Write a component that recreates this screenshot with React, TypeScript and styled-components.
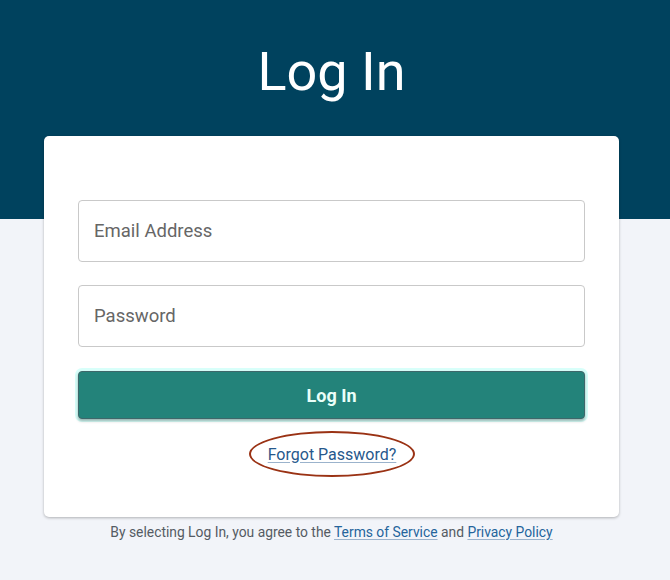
import React from "react";
import styled, { createGlobalStyle } from "styled-components";

const Global = createGlobalStyle`
  html, body { margin: 0; padding: 0; }
  body {
    font-family: Roboto, "Liberation Sans", Arial, sans-serif;
    background: #f2f4f9;
  }
  * { box-sizing: border-box; }
`;

const Page = styled.div`
  min-height: 580px;
  background: linear-gradient(#00425e 0, #00425e 219px, #f2f4f9 219px);
  display: flex;
  flex-direction: column;
  align-items: center;
  padding-right: 7px;
`;

const Title = styled.h1`
  margin: 0;
  height: 136px;
  padding-top: 36px;
  font-family: Roboto, "Liberation Sans", sans-serif;
  font-weight: 400;
  font-size: 54px;
  line-height: 72px;
  color: #ffffff;
  text-align: center;
`;

const Card = styled.div`
  width: 575px;
  background: #ffffff;
  border-radius: 5px;
  box-shadow: 0 1px 3px rgba(0, 0, 0, 0.28);
  padding: 64px 34px 0;
  height: 381px;
  display: flex;
  flex-direction: column;
`;

const Field = styled.input`
  width: 100%;
  height: 62px;
  border: 1px solid #c9c9c9;
  border-radius: 4px;
  padding: 0 15px;
  font-family: Roboto, "Liberation Sans", sans-serif;
  font-size: 18.5px;
  color: #333;
  background: #fff;
  outline: none;
  margin-bottom: ${(p: { $gap: number }) => p.$gap}px;
  &::placeholder { color: #666; }
`;

const Button = styled.button`
  width: 100%;
  height: 48px;
  border: 1px solid #3e676a;
  border-radius: 4px;
  background: #23837a;
  color: #eafff9;
  font-family: Roboto, "Liberation Sans", sans-serif;
  font-weight: 700;
  font-size: 18px;
  cursor: pointer;
  box-shadow: 0 2px 3px rgba(0, 0, 0, 0.3), 0 0 0 3px rgba(200, 255, 248, 0.7);
`;

const ForgotRow = styled.div`
  display: flex;
  justify-content: center;
  margin-top: 12px;
`;

const Ellipse = styled.div`
  width: 166px;
  height: 46px;
  border: 2px solid #9a3214;
  border-radius: 50%;
  display: flex;
  align-items: center;
  justify-content: center;
  padding-left: 1px;
`;

const Link = styled.a`
  color: ${(p: { $size: number }) => (p.$size > 15 ? "#26588c" : "#24649c")};
  font-size: ${(p: { $size: number }) => p.$size}px;
  text-decoration: underline;
  text-decoration-color: #9bb3cc;
  text-underline-offset: 2px;
  cursor: pointer;
`;

const Footer = styled.p`
  margin: 7px 0 0;
  font-size: 13.85px;
  line-height: 16px;
  color: #555b63;
  text-align: center;
`;

export default function App() {
  return (
    <>
      <Global />
      <Page>
        <Title>Log In</Title>
        <Card>
          <Field $gap={23} placeholder="Email Address" type="email" />
          <Field $gap={24} placeholder="Password" type="password" />
          <Button>Log In</Button>
          <ForgotRow>
            <Ellipse>
              <Link $size={16}>Forgot Password?</Link>
            </Ellipse>
          </ForgotRow>
        </Card>
        <Footer>
          By selecting Log In, you agree to the <Link $size={13.85}>Terms of Service</Link> and{" "}
          <Link $size={13.85}>Privacy Policy</Link>
        </Footer>
      </Page>
    </>
  );
}
